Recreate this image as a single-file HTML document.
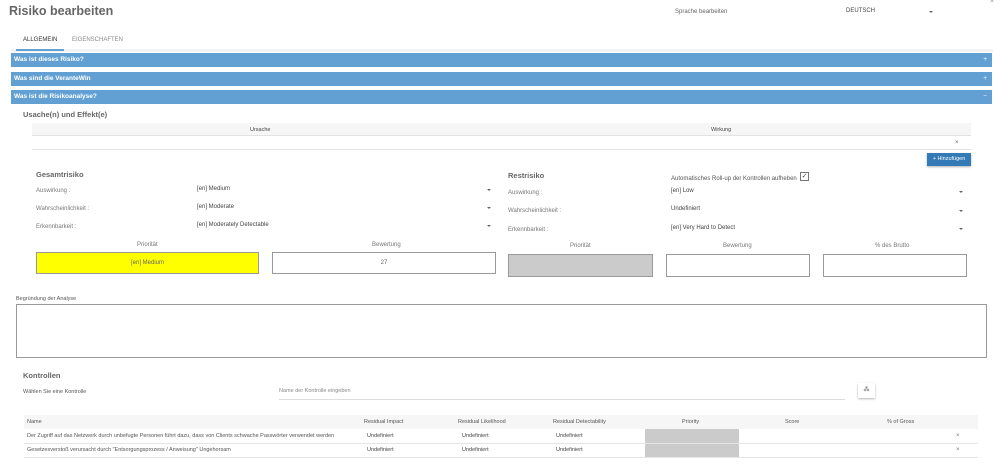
<!DOCTYPE html>
<html><head><meta charset="utf-8"><style>
*{margin:0;padding:0;box-sizing:border-box}
body{width:1000px;height:467px;background:#fff;font-family:"Liberation Sans",sans-serif;color:#555;position:relative;overflow:hidden;font-size:6px}
.a{position:absolute;white-space:nowrap}
.bar{position:absolute;left:11px;width:981px;height:14px;background:#62a0d4;color:#fff;font-weight:bold;font-size:6.5px;line-height:14px;padding-left:3px}
.bar span{position:absolute;right:5px;top:0;font-weight:normal}
.h{font-weight:bold;font-size:7.5px;color:#666}
.arr{position:absolute;width:0;height:0;border-left:2px solid transparent;border-right:2px solid transparent;border-top:2px solid #666}
.box{position:absolute;border:1px solid #999;font-size:6px;text-align:center}
.lab{color:#777;font-size:6px}
.v{color:#444;font-size:6px}
</style></head><body>
<div class="a" style="left:9px;top:4px;font-size:12.5px;font-weight:bold;color:#666">Risiko bearbeiten</div>
<div class="a lab" style="left:675px;top:9px;color:#666">Sprache bearbeiten</div>
<div class="a" style="left:846px;top:8px;color:#444;font-size:6px">DEUTSCH</div>
<div class="arr" style="left:929px;top:11px"></div>
<div class="a" style="left:990px;top:-2px;font-size:7px;color:#888">×</div>
<div class="a" style="left:23px;top:37px;color:#333;font-size:6px">ALLGEMEIN</div>
<div class="a" style="left:72px;top:37px;color:#888;font-size:6px">EIGENSCHAFTEN</div>
<div class="a" style="left:11px;top:49px;width:982px;height:3px;background:#f3f3f3"></div>
<div class="a" style="left:16px;top:49px;width:48px;height:2px;background:#62a0d4"></div>
<div class="bar" style="top:53px">Was ist dieses Risiko?<span>+</span></div>
<div class="bar" style="top:72px">Was sind die VeranteWin<span>+</span></div>
<div class="bar" style="top:90px">Was ist die Risikoanalyse?<span>−</span></div>
<div class="a h" style="left:23px;top:110px">Usache(n) und Effekt(e)</div>
<div class="a" style="left:32px;top:123px;width:939px;height:13px;background:#f6f6f6;border-bottom:1px solid #e3e3e3"></div>
<div class="a" style="left:250px;top:127px;font-size:5.5px;color:#444">Ursache</div>
<div class="a" style="left:711px;top:127px;font-size:5.5px;color:#444">Wirkung</div>
<div class="a" style="left:32px;top:149px;width:939px;height:1px;background:#e3e3e3"></div>
<div class="a" style="left:955px;top:140px;font-size:6px;color:#666">×</div>
<div class="a" style="left:927px;top:153px;width:44px;height:13px;background:#337ab7;color:#fff;font-size:5.5px;line-height:13px;text-align:center;box-shadow:0 1px 2px rgba(0,0,0,.3)">+ Hinzufügen</div>

<div class="a h" style="left:36px;top:170px">Gesamtrisiko</div>
<div class="a lab" style="left:36px;top:188px">Auswirkung :</div>
<div class="a lab" style="left:36px;top:206px">Wahrscheinlichkeit :</div>
<div class="a lab" style="left:36px;top:224px">Erkennbarkeit :</div>
<div class="a v" style="left:197px;top:186px">[en] Medium</div>
<div class="a v" style="left:197px;top:204px">[en] Moderate</div>
<div class="a v" style="left:197px;top:222px">[en] Moderately Detectable</div>
<div class="arr" style="left:487px;top:189px"></div>
<div class="arr" style="left:487px;top:207px"></div>
<div class="arr" style="left:487px;top:225px"></div>
<div class="a lab" style="left:137px;top:242px">Priorität</div>
<div class="a lab" style="left:372px;top:242px">Bewertung</div>
<div class="box" style="left:36px;top:252px;width:223px;height:22px;background:#ffff00;border-color:#999;line-height:20px;color:#666">[en] Medium</div>
<div class="box" style="left:272px;top:252px;width:224px;height:22px;line-height:20px;color:#666">27</div>

<div class="a h" style="left:508px;top:171px">Restrisiko</div>
<div class="a lab" style="left:671px;top:176px;color:#555">Automatisches Roll-up der Kontrollen aufheben</div>
<div class="a" style="left:800px;top:172px;width:9px;height:9px;border:1px solid #777;font-size:7px;line-height:7px;text-align:center;color:#444">✓</div>
<div class="a lab" style="left:508px;top:190px">Auswirkung :</div>
<div class="a lab" style="left:508px;top:208px">Wahrscheinlichkeit :</div>
<div class="a lab" style="left:508px;top:227px">Erkennbarkeit :</div>
<div class="a v" style="left:671px;top:188px">[en] Low</div>
<div class="a v" style="left:671px;top:206px">Undefiniert</div>
<div class="a v" style="left:671px;top:225px">[en] Very Hard to Detect</div>
<div class="arr" style="left:959px;top:191px"></div>
<div class="arr" style="left:959px;top:210px"></div>
<div class="arr" style="left:959px;top:228px"></div>
<div class="a lab" style="left:570px;top:243px">Priorität</div>
<div class="a lab" style="left:723px;top:243px">Bewertung</div>
<div class="a lab" style="left:875px;top:243px">% des Brutto</div>
<div class="box" style="left:508px;top:254px;width:145px;height:23px;background:#cbcbcb"></div>
<div class="box" style="left:666px;top:254px;width:144px;height:23px"></div>
<div class="box" style="left:823px;top:254px;width:144px;height:23px"></div>

<div class="a" style="left:16px;top:296px;font-size:5.5px;color:#555">Begründung der Analyse</div>
<div class="box" style="left:16px;top:304px;width:971px;height:54px"></div>

<div class="a h" style="left:23px;top:371px">Kontrollen</div>
<div class="a" style="left:23px;top:389px;font-size:5.5px;color:#555">Wählen Sie eine Kontrolle</div>
<div class="a" style="left:279px;top:388px;font-size:5.5px;color:#888">Name der Kontrolle eingeben</div>
<div class="a" style="left:279px;top:399px;width:566px;height:1px;background:#ddd"></div>
<div class="a" style="left:858px;top:383px;width:17px;height:15px;background:#fff;box-shadow:0 1px 2px rgba(0,0,0,.3);font-size:6px;text-align:center;line-height:14px;color:#555">⁂</div>

<div class="a" style="left:24px;top:415px;width:954px;height:14px;background:#f6f6f6"></div>
<div class="a" style="left:27px;top:419px;font-size:5.5px;color:#555">Name</div>
<div class="a" style="left:364px;top:419px;font-size:5.5px;color:#555">Residual Impact</div>
<div class="a" style="left:458px;top:419px;font-size:5.5px;color:#555">Residual Likelihood</div>
<div class="a" style="left:553px;top:419px;font-size:5.5px;color:#555">Residual Detectability</div>
<div class="a" style="left:682px;top:419px;font-size:5.5px;color:#555">Priority</div>
<div class="a" style="left:785px;top:419px;font-size:5.5px;color:#555">Score</div>
<div class="a" style="left:887px;top:419px;font-size:5.5px;color:#555">% of Gross</div>
<div class="a" style="left:645px;top:429px;width:94px;height:28px;background:#cbcbcb"></div>
<div class="a" style="left:24px;top:443px;width:954px;height:1px;background:#e5e5e5"></div>
<div class="a" style="left:24px;top:457px;width:954px;height:1px;background:#e5e5e5"></div>
<div class="a" style="left:27px;top:433px;font-size:5.5px;color:#555">Der Zugriff auf das Netzwerk durch unbefugte Personen führt dazu, dass von Clients schwache Passwörter verwendet werden</div>
<div class="a" style="left:27px;top:447px;font-size:5.5px;color:#555">Gesetzesverstoß verursacht durch "Entsorgungsprozess / Anweisung" Ungehorsam</div>
<div class="a" style="left:367px;top:433px;font-size:5.5px;color:#444">Undefiniert</div>
<div class="a" style="left:462px;top:433px;font-size:5.5px;color:#444">Undefiniert</div>
<div class="a" style="left:556px;top:433px;font-size:5.5px;color:#444">Undefiniert</div>
<div class="a" style="left:367px;top:447px;font-size:5.5px;color:#444">Undefiniert</div>
<div class="a" style="left:462px;top:447px;font-size:5.5px;color:#444">Undefiniert</div>
<div class="a" style="left:556px;top:447px;font-size:5.5px;color:#444">Undefiniert</div>
<div class="a" style="left:956px;top:433px;font-size:6px;color:#777">×</div>
<div class="a" style="left:956px;top:447px;font-size:6px;color:#777">×</div>
</body></html>
